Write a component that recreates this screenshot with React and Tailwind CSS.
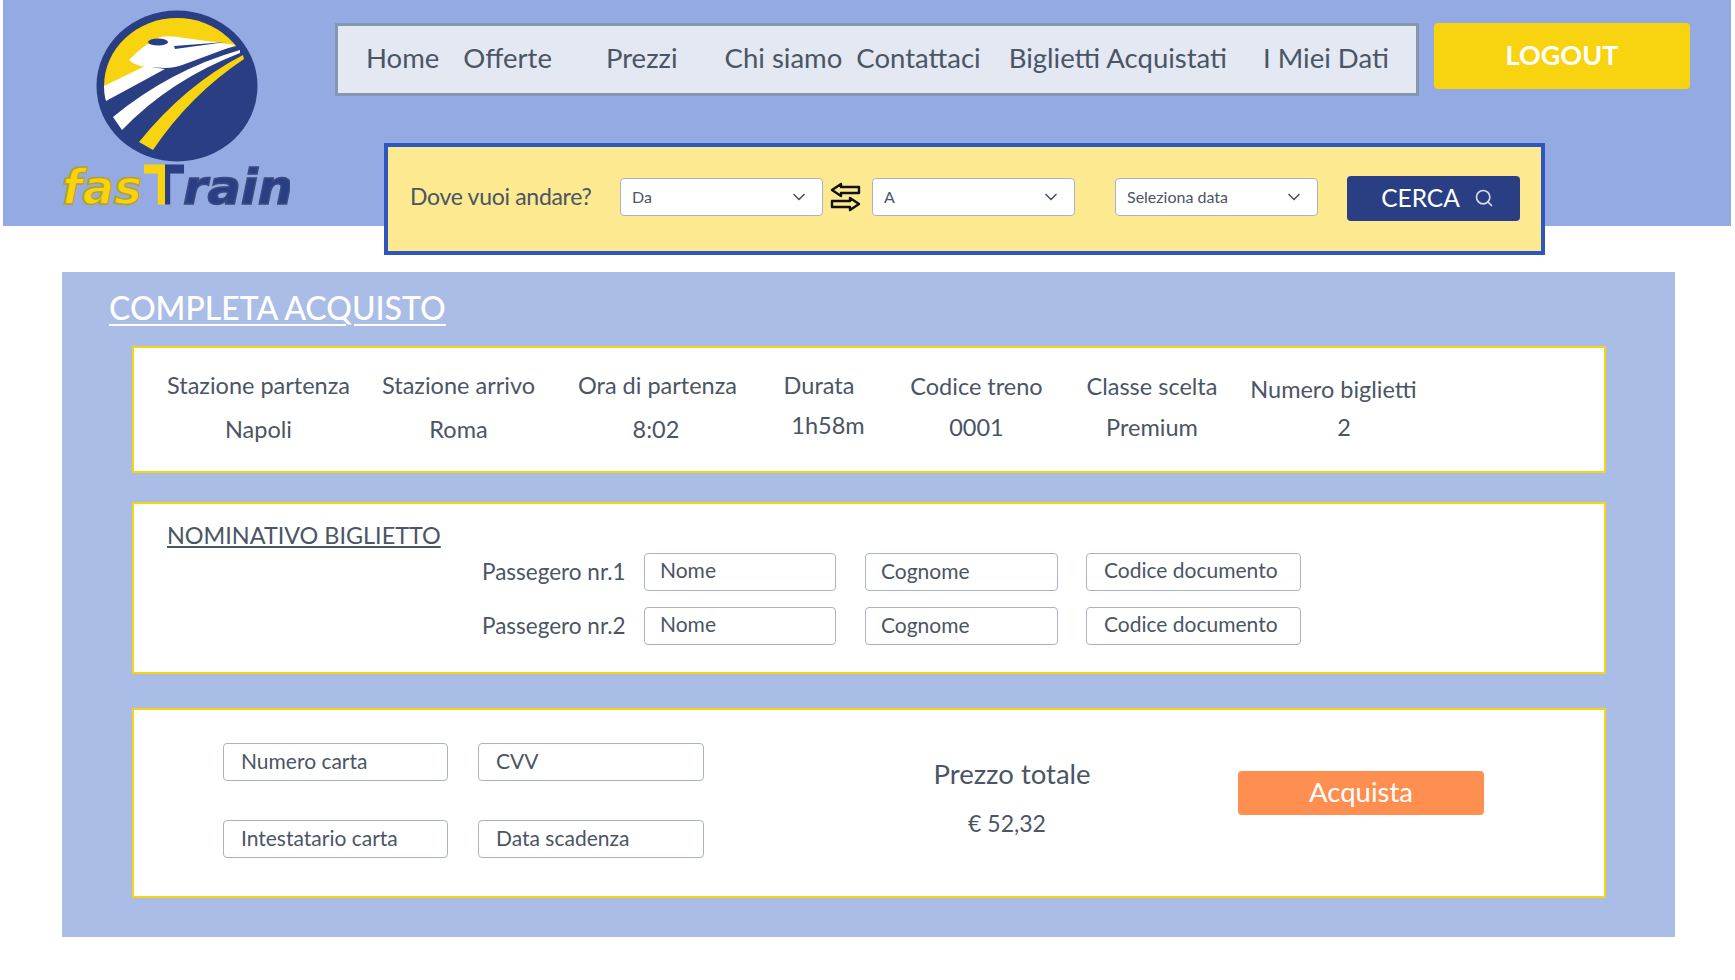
import React from 'react'
import { ChevronDown, Search } from 'lucide-react'

const Logo = () => (
  <svg width="240" height="224" viewBox="50 0 240 224" className="shrink-0">
    <defs>
      <clipPath id="inner"><ellipse cx="177" cy="86" rx="73" ry="68" /></clipPath>
      <linearGradient id="tee" x1="0" x2="1" y1="0" y2="0">
        <stop offset="0.52" stopColor="#f8d30f" />
        <stop offset="0.52" stopColor="#2a3f83" />
      </linearGradient>
    </defs>
    <ellipse cx="177" cy="86" rx="80.5" ry="75.5" fill="#2a3f83" />
    <g clipPath="url(#inner)">
      <path d="M90 95L145 68L245 44V0H90Z" fill="#f8d30f" />
      <path d="M100 88L145 66L165 69L106 101Z" fill="#fff" />
    </g>
    <path d="M236 45L185 38Q170 35 160 37Q143 45 129 60Q135 66 148 67L165 68Q175 68 185 64Z" fill="#fff" />
    <ellipse cx="158" cy="42" rx="10" ry="3.6" fill="#2a3f83" />
    <path d="M174 46L226 42L175 49Z" fill="#2a3f83" />
    <path d="M240 50Q170 70 113 117L122 130Q170 80 240 53Z" fill="#fff" />
    <path d="M243 55Q185 85 139 142L153 150Q190 95 244 59Z" fill="#f8d30f" />
    <text x="62" y="204" fontFamily="'DejaVu Sans', sans-serif" fontWeight="700" fontStyle="italic" fontSize="48" stroke="#b5a22a" strokeWidth="1.6" textLength="80" lengthAdjust="spacingAndGlyphs" fill="#f8d30f">fas</text>
    <text x="145" y="203" fontFamily="'Liberation Sans', sans-serif" fontWeight="700" fontSize="54" stroke="url(#tee)" strokeWidth="3" textLength="38" lengthAdjust="spacingAndGlyphs" fill="url(#tee)">T</text>
    <text x="183" y="204" fontFamily="'DejaVu Sans', sans-serif" fontWeight="700" fontStyle="italic" fontSize="48" stroke="#3d4a80" strokeWidth="1.6" textLength="110" lengthAdjust="spacingAndGlyphs" fill="#2a3f83">rain</text>
  </svg>
)

const SwapIcon = () => (
  <svg width="31" height="30" viewBox="0 0 31 30" className="shrink-0" fill="#fce990" stroke="#111" strokeWidth="2.4" strokeLinejoin="round">
    <path d="M11 2L2 8L11 14V11H29V5H11Z" />
    <path d="M20 16L29 22L20 28V25H2V19H20Z" />
  </svg>
)

const Select = ({ label, className }) => (
  <div className={`h-[38px] w-[203px] shrink-0 flex items-center justify-between pl-[11px] pr-[13px] bg-white rounded border border-[#a9b3c4] text-[16px] text-gray-600 ${className}`}>
    <span>{label}</span>
    <ChevronDown size={20} strokeWidth={2} />
  </div>
)

const Field = ({ label, className }) => (
  <div className={`h-[38px] shrink-0 flex items-center pb-[3px] bg-white rounded border border-[#a9b3c4] text-[21px] text-gray-600 ${className}`}>{label}</div>
)

const Info = ({ label, value, className, valueClass }) => (
  <div className={`shrink-0 flex flex-col items-center whitespace-nowrap ${className}`}>
    <span>{label}</span>
    <span className={valueClass}>{value}</span>
  </div>
)

const Passenger = ({ n }) => (
  <div className="flex items-center">
    <span className="w-[143px] text-[22.5px] whitespace-nowrap">Passegero nr.{n}</span>
    <Field label="Nome" className="ml-[19px] w-[192px] pl-[15px]" />
    <Field label="Cognome" className="ml-[29px] mt-[1px] w-[193px] pl-[15px]" />
    <Field label="Codice documento" className="ml-[28px] w-[215px] pl-[17px]" />
  </div>
)

const App = () => {
  return (
    <div className="min-h-[980px] bg-white text-gray-600 font-['Lato',sans-serif]">
      <header className="ml-[3px] w-[1728px] h-[226px] bg-[#94aae3] flex">
        <div className="w-[332px] shrink-0 pl-[47px]"><Logo /></div>
        <div className="flex-1">
          <div className="flex mt-[23px]">
            <nav className="w-[1084px] h-[73px] flex items-center pb-[4px] bg-[#e4e8f2] border-[3px] border-[#8496b0] text-[27.5px] whitespace-nowrap">
              <a className="ml-[28px]">Home</a>
              <a className="ml-[24px]">Offerte</a>
              <a className="ml-[54px]">Prezzi</a>
              <a className="ml-[47px]">Chi siamo</a>
              <a className="ml-[14px]">Contattaci</a>
              <a className="ml-[28px]">Biglietti Acquistati</a>
              <a className="ml-[36px]">I Miei Dati</a>
            </nav>
            <button className="ml-[15px] w-[256px] h-[66px] pb-[2px] bg-[#f8d30f] rounded text-white text-[27px] font-bold">LOGOUT</button>
          </div>
          <div className="ml-[49px] mt-[47px] w-[1161px] h-[112px] flex items-center pb-[4px] bg-[#fce990] border-[4px] border-[#2f55bf]">
            <span className="ml-[22px] mb-[2px] w-[210px] text-[23px] tracking-[-0.3px] whitespace-nowrap">Dove vuoi andare?</span>
            <Select label="Da" />
            <div className="ml-[7px]"><SwapIcon /></div>
            <Select label="A" className="ml-[11px]" />
            <Select label="Seleziona data" className="ml-[40px]" />
            <button className="ml-[29px] mt-[2px] w-[173px] h-[45px] pl-[8px] flex items-center justify-center gap-[14px] bg-[#2a3f83] rounded text-white text-[24.5px]">
              CERCA <Search size={20} strokeWidth={2} className="text-[#d5dbec]" />
            </button>
          </div>
        </div>
      </header>

      <main className="mt-[46px] ml-[62px] w-[1613px] h-[665px] bg-[#aabde6] pt-[12px]">
        <h1 className="ml-[47px] h-[62px] text-[32px] font-medium text-white underline underline-offset-4 decoration-2">COMPLETA ACQUISTO</h1>

        <section className="ml-[70px] w-[1474px] h-[127px] bg-white border-[2px] border-[#f8d30f] flex text-[23.5px] pt-[20px]">
          <Info label="Stazione partenza" value="Napoli" className="ml-[33px] w-[183px] gap-[9px]" />
          <Info label="Stazione arrivo" value="Roma" className="ml-[32px] w-[153px] gap-[9px]" />
          <Info label="Ora di partenza" value="8:02" className="ml-[43px] w-[159px] gap-[9px]" valueClass="mr-[3px]" />
          <Info label="Durata" value="1h58m" className="ml-[46px] w-[72px] gap-[5px]" valueClass="ml-[18px]" />
          <Info label="Codice treno" value="0001" className="ml-[55px] w-[133px] gap-[6px] mt-[1px]" />
          <Info label="Classe scelta" value="Premium" className="ml-[43px] w-[132px] gap-[6px] mt-[1px]" />
          <Info label="Numero biglietti" value="2" className="ml-[31px] w-[169px] gap-[3px] mt-[4px]" valueClass="ml-[21px]" />
        </section>

        <section className="ml-[70px] mt-[29px] w-[1474px] h-[172px] bg-white border-[2px] border-[#f8d30f] pl-[33px] pt-[14px]">
          <h2 className="text-[23.4px] underline underline-offset-2 h-[34px]">NOMINATIVO BIGLIETTO</h2>
          <div className="ml-[315px] flex flex-col gap-[15px]">
            <Passenger n={1} />
            <Passenger n={2} />
          </div>
        </section>

        <section className="ml-[70px] mt-[34px] w-[1474px] h-[190px] bg-white border-[2px] border-[#f8d30f] flex">
          <div className="ml-[89px] mt-[33px] grid grid-cols-[225px_226px] gap-x-[30px] gap-y-[39px] h-fit">
            <Field label="Numero carta" className="pl-[17px]" />
            <Field label="CVV" className="pl-[17px]" />
            <Field label="Intestatario carta" className="pl-[17px]" />
            <Field label="Data scadenza" className="pl-[17px]" />
          </div>
          <div className="ml-[228px] mt-[43px] w-[160px] flex flex-col items-center shrink-0">
            <span className="text-[27.5px] whitespace-nowrap">Prezzo totale</span>
            <span className="mt-[12px] mr-[10px] text-[23px] whitespace-nowrap">€ 52,32</span>
          </div>
          <button className="ml-[146px] mt-[61px] pb-[2px] w-[246px] h-[44px] bg-[#ff8f50] rounded text-white text-[27.5px]">Acquista</button>
        </section>
      </main>
    </div>
  )
}

export default App
